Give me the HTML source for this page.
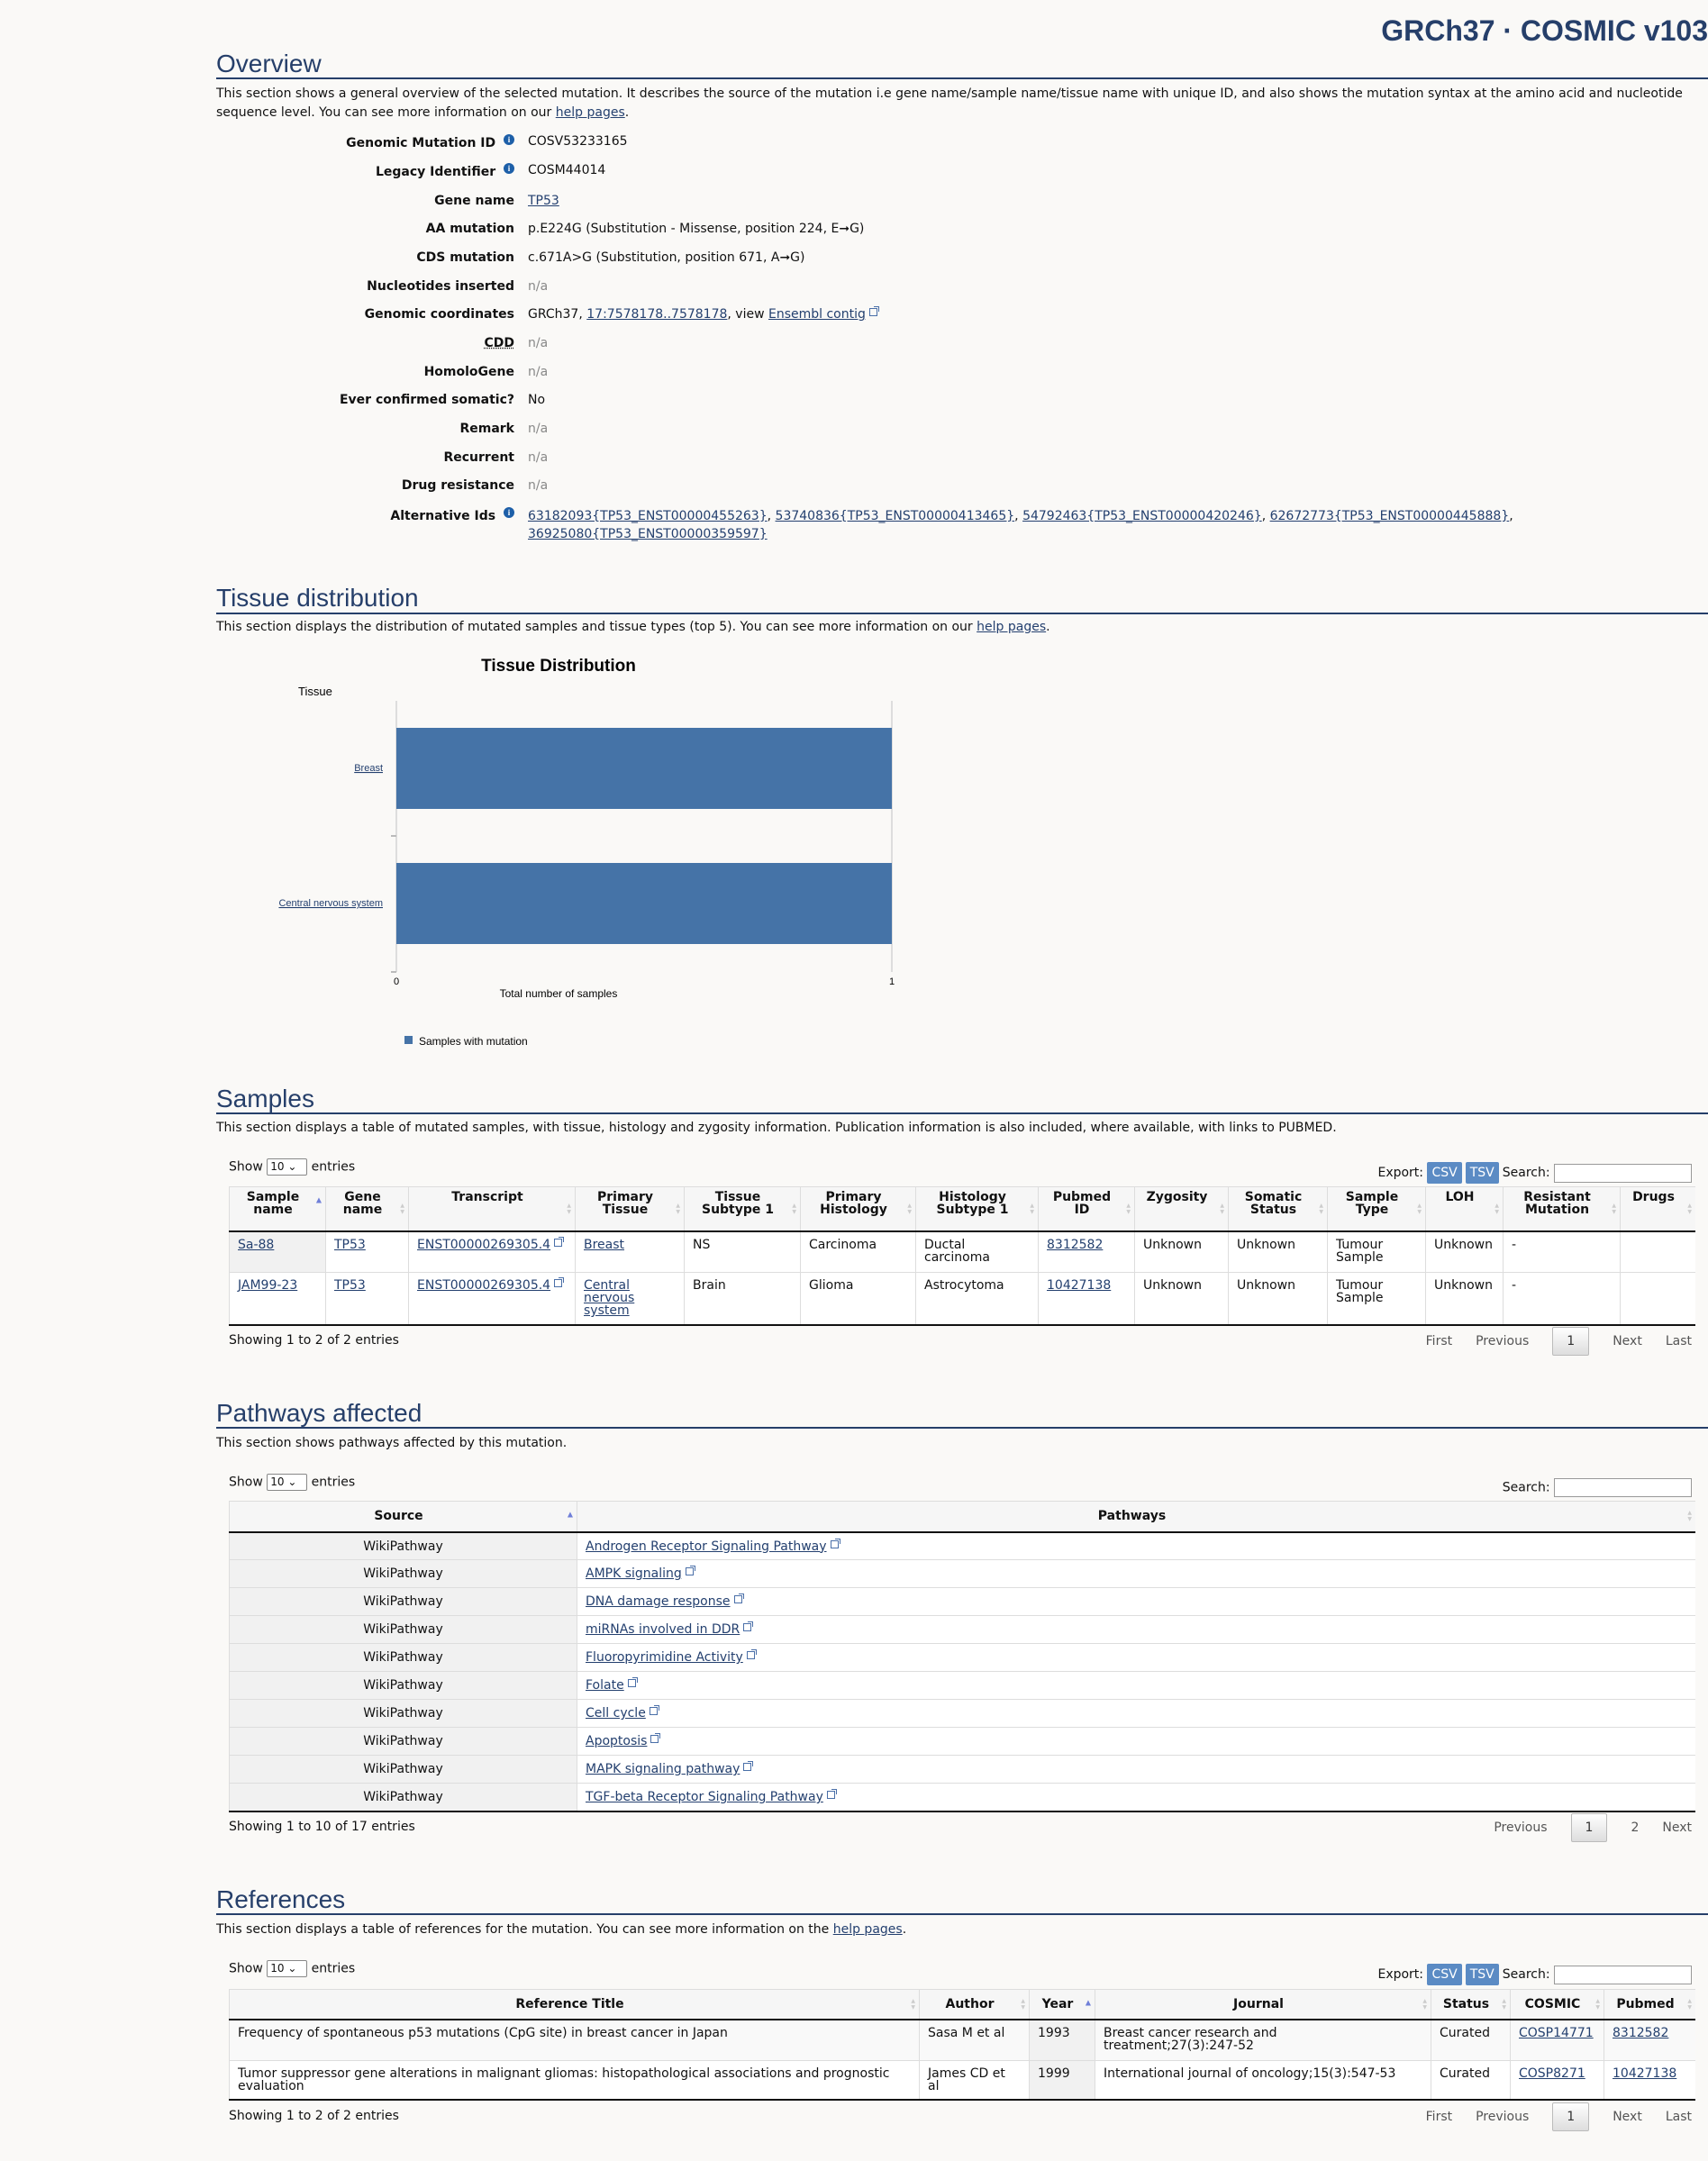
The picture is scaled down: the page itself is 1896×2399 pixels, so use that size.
<!DOCTYPE html>
<html><head><meta charset="utf-8">
<style>
*{box-sizing:border-box;margin:0;padding:0}
body{width:1896px;height:2399px;background:#faf9f7;font-family:"DejaVu Sans","Liberation Sans",sans-serif;font-size:14px;color:#111;position:relative;overflow:hidden}
a{color:#24406f;text-decoration:underline}
.abs{position:absolute}
.top{right:0;top:16px;font-family:"Liberation Sans",sans-serif;font-size:32px;font-weight:bold;color:#263f6a;letter-spacing:0px}
h2{position:absolute;left:240px;font-family:"Liberation Sans",sans-serif;font-weight:normal;font-size:28px;color:#263f6a;margin-top:3px}
.rule{position:absolute;left:240px;right:0;height:2px;background:#263f6a}
.p{position:absolute;left:240px;width:1645px;line-height:21px}
.lab{position:absolute;right:1325px;font-weight:bold;text-align:right;white-space:nowrap}
.val{position:absolute;left:586px;white-space:nowrap}
.na{color:#888}
.i{display:inline-block;width:12px;height:12px;border-radius:50%;background:#1d5fa8;color:#fff;font-size:9px;line-height:12px;text-align:center;font-weight:bold;vertical-align:5px;margin-left:4px;font-family:"Liberation Serif",serif}
.ext{display:inline-block;width:9px;height:9px;border:1px solid #4a6fa8;margin-left:4px;position:relative;vertical-align:2px}
.ext:after{content:"";position:absolute;right:-3px;top:-3px;width:5px;height:5px;border-top:1.5px solid #4a6fa8;border-right:1.5px solid #4a6fa8}
table{position:absolute;left:254px;width:1628px;border-collapse:collapse;background:#fff;table-layout:fixed}
th{background:#f6f6f6;font-weight:bold;border-left:1px solid #ddd;border-bottom:2px solid #111;border-top:1px solid #ddd;line-height:14px;padding:4px 16px 4px 6px;text-align:center;vertical-align:top;position:relative}
th:after{content:"▲\A▼";white-space:pre;position:absolute;right:4px;top:50%;transform:translateY(-50%);font-size:6px;line-height:7px;color:#ccc}
th.s:after{content:"▲";color:#6f7fd8;top:14px;font-size:8px}
td{border-left:1px solid #ddd;border-top:1px solid #ddd;padding:7px 9px;vertical-align:top;line-height:14px}
tr:last-child td{border-bottom:2px solid #111}
.sorted{background:#f1f1f1}
.show{position:absolute;left:254px}
.sel{display:inline-block;width:45px;height:19px;border:1px solid #888;border-radius:2px;font-size:12px;padding-left:3px;line-height:17px;background:#fff;vertical-align:middle}
.right{position:absolute;right:18px;white-space:nowrap}
.btn{display:inline-block;background:#5b8bc4;color:#fff;padding:4px 5px;border-radius:2px;margin-right:4px}
.inp{display:inline-block;width:153px;height:21px;border:1px solid #999;background:#fff;vertical-align:middle}
.pg{position:absolute;right:18px;color:#555;white-space:nowrap}
.pg span{margin-left:26px}
.pg .cur{display:inline-block;border:1px solid #bbb;background:linear-gradient(#fff,#ddd);padding:7px 15px;color:#333;border-radius:2px}
</style></head><body>
<div class="abs top">GRCh37 · COSMIC v103</div>

<h2 style="top:52px">Overview</h2>
<div class="rule" style="top:86px"></div>
<div class="p" style="top:94px">This section shows a general overview of the selected mutation. It describes the source of the mutation i.e gene name/sample name/tissue name with unique ID, and also shows the mutation syntax at the amino acid and nucleotide sequence level. You can see more information on our <a href="#">help pages</a>.</div>

<div class="lab" style="top:149px">Genomic Mutation ID <span class="i">i</span></div><div class="val" style="top:149px">COSV53233165</div>
<div class="lab" style="top:181px">Legacy Identifier <span class="i">i</span></div><div class="val" style="top:181px">COSM44014</div>
<div class="lab" style="top:215px">Gene name</div><div class="val" style="top:215px"><a href="#">TP53</a></div>
<div class="lab" style="top:246px">AA mutation</div><div class="val" style="top:246px">p.E224G (Substitution - Missense, position 224, E➞G)</div>
<div class="lab" style="top:278px">CDS mutation</div><div class="val" style="top:278px">c.671A&gt;G (Substitution, position 671, A➞G)</div>
<div class="lab" style="top:310px">Nucleotides inserted</div><div class="val na" style="top:310px">n/a</div>
<div class="lab" style="top:341px">Genomic coordinates</div><div class="val" style="top:341px">GRCh37, <a href="#">17:7578178..7578178</a>, view <a href="#">Ensembl contig</a><span class="ext"></span></div>
<div class="lab" style="top:373px;text-decoration:underline dotted">CDD</div><div class="val na" style="top:373px">n/a</div>
<div class="lab" style="top:405px">HomoloGene</div><div class="val na" style="top:405px">n/a</div>
<div class="lab" style="top:436px">Ever confirmed somatic?</div><div class="val" style="top:436px">No</div>
<div class="lab" style="top:468px">Remark</div><div class="val na" style="top:468px">n/a</div>
<div class="lab" style="top:500px">Recurrent</div><div class="val na" style="top:500px">n/a</div>
<div class="lab" style="top:531px">Drug resistance</div><div class="val na" style="top:531px">n/a</div>
<div class="lab" style="top:563px">Alternative Ids <span class="i">i</span></div>
<div class="val" style="top:563px;white-space:normal;width:1300px;line-height:20px"><a href="#">63182093{TP53_ENST00000455263}</a>, <a href="#">53740836{TP53_ENST00000413465}</a>, <a href="#">54792463{TP53_ENST00000420246}</a>, <a href="#">62672773{TP53_ENST00000445888}</a>, <a href="#">36925080{TP53_ENST00000359597}</a></div>

<h2 style="top:645px">Tissue distribution</h2>
<div class="rule" style="top:680px"></div>
<div class="p" style="top:686px">This section displays the distribution of mutated samples and tissue types (top 5). You can see more information on our <a href="#">help pages</a>.</div>

<svg class="abs" style="left:300px;top:720px" width="720" height="450" font-family="Liberation Sans,sans-serif">
<text x="320" y="25" text-anchor="middle" font-size="19" font-weight="bold">Tissue Distribution</text>
<text x="31" y="52" font-size="13">Tissue</text>
<line x1="140" y1="58" x2="140" y2="359" stroke="#ddd" stroke-width="2"/>
<line x1="690" y1="58" x2="690" y2="359" stroke="#ddd" stroke-width="2"/>
<line x1="134" y1="208" x2="140" y2="208" stroke="#bbb" stroke-width="2"/>
<line x1="134" y1="359" x2="140" y2="359" stroke="#bbb" stroke-width="2"/>
<rect x="140" y="88" width="550" height="90" fill="#4573a7"/>
<rect x="140" y="238" width="550" height="90" fill="#4573a7"/>
<text x="125" y="136" font-size="11" text-anchor="end" fill="#24406f" text-decoration="underline">Breast</text>
<text x="125" y="286" font-size="11" text-anchor="end" fill="#24406f" text-decoration="underline">Central nervous system</text>
<text x="140" y="373" font-size="11" text-anchor="middle">0</text>
<text x="690" y="373" font-size="11" text-anchor="middle">1</text>
<text x="320" y="387" font-size="12" text-anchor="middle">Total number of samples</text>
<rect x="149" y="430" width="9" height="9" fill="#4573a7"/>
<text x="165" y="440" font-size="12">Samples with mutation</text>
</svg>

<h2 style="top:1201px">Samples</h2>
<div class="rule" style="top:1235px"></div>
<div class="p" style="top:1242px">This section displays a table of mutated samples, with tissue, histology and zygosity information. Publication information is also included, where available, with links to PUBMED.</div>
<div class="show" style="top:1286px">Show <span class="sel">10 ⌄</span> entries</div>
<div class="right" style="top:1290px">Export: <span class="btn">CSV</span><span class="btn">TSV</span>Search: <span class="inp"></span></div>
<table style="top:1317px">
<tr style="height:49px"><th class="s" style="width:107px">Sample name</th><th style="width:92px">Gene name</th><th style="width:185px">Transcript</th><th style="width:121px">Primary Tissue</th><th style="width:129px">Tissue Subtype 1</th><th style="width:128px">Primary Histology</th><th style="width:136px">Histology Subtype 1</th><th style="width:107px">Pubmed ID</th><th style="width:104px">Zygosity</th><th style="width:110px">Somatic Status</th><th style="width:109px">Sample Type</th><th style="width:86px">LOH</th><th style="width:130px">Resistant Mutation</th><th>Drugs</th></tr>
<tr style="height:46px"><td class="sorted"><a href="#">Sa-88</a></td><td><a href="#">TP53</a></td><td><a href="#">ENST00000269305.4</a><span class="ext"></span></td><td><a href="#">Breast</a></td><td>NS</td><td>Carcinoma</td><td>Ductal carcinoma</td><td><a href="#">8312582</a></td><td>Unknown</td><td>Unknown</td><td>Tumour Sample</td><td>Unknown</td><td>-</td><td></td></tr>
<tr style="height:58px"><td><a href="#">JAM99-23</a></td><td><a href="#">TP53</a></td><td><a href="#">ENST00000269305.4</a><span class="ext"></span></td><td><a href="#">Central nervous system</a></td><td>Brain</td><td>Glioma</td><td>Astrocytoma</td><td><a href="#">10427138</a></td><td>Unknown</td><td>Unknown</td><td>Tumour Sample</td><td>Unknown</td><td>-</td><td></td></tr>
</table>
<div class="show" style="top:1480px">Showing 1 to 2 of 2 entries</div>
<div class="pg" style="top:1473px">First<span>Previous</span><span class="cur">1</span><span>Next</span><span>Last</span></div>

<h2 style="top:1550px">Pathways affected</h2>
<div class="rule" style="top:1584px"></div>
<div class="p" style="top:1592px">This section shows pathways affected by this mutation.</div>
<div class="show" style="top:1636px">Show <span class="sel">10 ⌄</span> entries</div>
<div class="right" style="top:1641px">Search: <span class="inp"></span></div>
<table style="top:1666px">
<tr style="height:34px"><th class="s" style="width:386px;padding-top:9px">Source</th><th style="padding-top:9px">Pathways</th></tr>
<tr style="height:31px"><td class="sorted" style="text-align:center;padding-top:8px">WikiPathway</td><td style="padding-top:8px"><a href="#">Androgen Receptor Signaling Pathway</a><span class="ext"></span></td></tr>
<tr style="height:31px"><td class="sorted" style="text-align:center;padding-top:8px">WikiPathway</td><td style="padding-top:8px"><a href="#">AMPK signaling</a><span class="ext"></span></td></tr>
<tr style="height:31px"><td class="sorted" style="text-align:center;padding-top:8px">WikiPathway</td><td style="padding-top:8px"><a href="#">DNA damage response</a><span class="ext"></span></td></tr>
<tr style="height:31px"><td class="sorted" style="text-align:center;padding-top:8px">WikiPathway</td><td style="padding-top:8px"><a href="#">miRNAs involved in DDR</a><span class="ext"></span></td></tr>
<tr style="height:31px"><td class="sorted" style="text-align:center;padding-top:8px">WikiPathway</td><td style="padding-top:8px"><a href="#">Fluoropyrimidine Activity</a><span class="ext"></span></td></tr>
<tr style="height:31px"><td class="sorted" style="text-align:center;padding-top:8px">WikiPathway</td><td style="padding-top:8px"><a href="#">Folate</a><span class="ext"></span></td></tr>
<tr style="height:31px"><td class="sorted" style="text-align:center;padding-top:8px">WikiPathway</td><td style="padding-top:8px"><a href="#">Cell cycle</a><span class="ext"></span></td></tr>
<tr style="height:31px"><td class="sorted" style="text-align:center;padding-top:8px">WikiPathway</td><td style="padding-top:8px"><a href="#">Apoptosis</a><span class="ext"></span></td></tr>
<tr style="height:31px"><td class="sorted" style="text-align:center;padding-top:8px">WikiPathway</td><td style="padding-top:8px"><a href="#">MAPK signaling pathway</a><span class="ext"></span></td></tr>
<tr style="height:31px"><td class="sorted" style="text-align:center;padding-top:8px">WikiPathway</td><td style="padding-top:8px"><a href="#">TGF-beta Receptor Signaling Pathway</a><span class="ext"></span></td></tr>
</table>
<div class="show" style="top:2020px">Showing 1 to 10 of 17 entries</div>
<div class="pg" style="top:2013px">Previous<span class="cur">1</span><span>2</span><span>Next</span></div>

<h2 style="top:2090px">References</h2>
<div class="rule" style="top:2124px"></div>
<div class="p" style="top:2132px">This section displays a table of references for the mutation. You can see more information on the <a href="#">help pages</a>.</div>
<div class="show" style="top:2176px">Show <span class="sel">10 ⌄</span> entries</div>
<div class="right" style="top:2180px">Export: <span class="btn">CSV</span><span class="btn">TSV</span>Search: <span class="inp"></span></div>
<table style="top:2208px">
<tr style="height:33px"><th style="width:766px;padding-top:9px">Reference Title</th><th style="width:122px;padding-top:9px">Author</th><th class="s" style="width:73px;padding-top:9px">Year</th><th style="width:373px;padding-top:9px">Journal</th><th style="width:88px;padding-top:9px">Status</th><th style="width:104px;padding-top:9px">COSMIC</th><th style="padding-top:9px">Pubmed</th></tr>
<tr style="height:46px;background:#f9f9f9"><td>Frequency of spontaneous p53 mutations (CpG site) in breast cancer in Japan</td><td>Sasa M et al</td><td class="sorted">1993</td><td>Breast cancer research and<br>treatment;27(3):247-52</td><td>Curated</td><td><a href="#">COSP14771</a></td><td><a href="#">8312582</a></td></tr>
<tr style="height:43px"><td>Tumor suppressor gene alterations in malignant gliomas: histopathological associations and prognostic evaluation</td><td>James CD et<br>al</td><td class="sorted">1999</td><td>International journal of oncology;15(3):547-53</td><td>Curated</td><td><a href="#">COSP8271</a></td><td><a href="#">10427138</a></td></tr>
</table>
<div class="show" style="top:2341px">Showing 1 to 2 of 2 entries</div>
<div class="pg" style="top:2334px">First<span>Previous</span><span class="cur">1</span><span>Next</span><span>Last</span></div>
</body></html>
